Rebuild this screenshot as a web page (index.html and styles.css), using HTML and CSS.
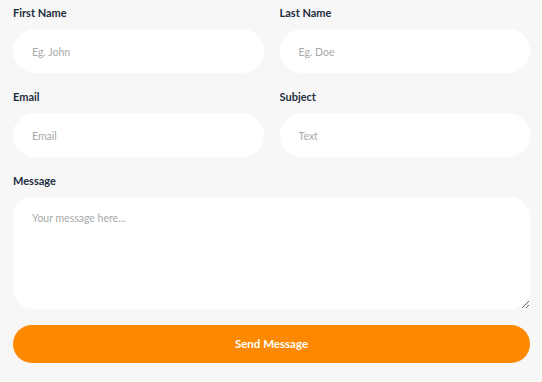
FILE: index.html
```html
<!DOCTYPE html>
<html>
<head>
<meta charset="utf-8">
<link rel="stylesheet" href="styles.css">
</head>
<body>
<form class="form">
  <div class="grid">
    <div class="field">
      <label class="label">First Name</label>
      <input class="input" type="text" placeholder="Eg. John">
    </div>
    <div class="field">
      <label class="label">Last Name</label>
      <input class="input" type="text" placeholder="Eg. Doe">
    </div>
    <div class="field">
      <label class="label">Email</label>
      <input class="input" type="text" placeholder="Email">
    </div>
    <div class="field">
      <label class="label">Subject</label>
      <input class="input" type="text" placeholder="Text">
    </div>
    <div class="field wide">
      <label class="label">Message</label>
      <textarea class="input textarea" placeholder="Your message here..."></textarea>
    </div>
  </div>
  <button class="btn" type="button">Send Message</button>
</form>
</body>
</html>
```

FILE: styles.css
```css
* { box-sizing: border-box; }
html, body { margin: 0; background: #f7f7f7; }
body { font-family: Lato, "Liberation Sans", sans-serif; }
.form {
  padding: 5px 12px 0 13px;
  display: flex;
  flex-direction: column;
  gap: 16px;
}
.grid {
  display: grid;
  grid-template-columns: 1fr 1fr;
  column-gap: 16px;
  row-gap: 16px;
}
.field { display: flex; flex-direction: column; gap: 8px; }
.wide { grid-column: 1 / -1; }
.label {
  font-size: 11px;
  font-weight: 700;
  line-height: 16px;
  color: #1d2d3d;
}
.input {
  height: 44px;
  border: none;
  border-radius: 22px;
  background: #fff;
  padding: 2px 19px 0 19px;
  font-family: inherit;
  font-size: 10.5px;
  color: #333;
  outline: none;
}
.input::placeholder { color: #a9a9a9; }
.textarea {
  height: 112px;
  border-radius: 20px;
  padding: 15px 19px;
  resize: vertical;
}
.btn {
  height: 38px;
  border: none;
  border-radius: 19px;
  background: #fd8801;
  color: #fff;
  font-family: inherit;
  font-weight: 700;
  font-size: 11.5px;
  padding: 0 0 2px;
}
```
